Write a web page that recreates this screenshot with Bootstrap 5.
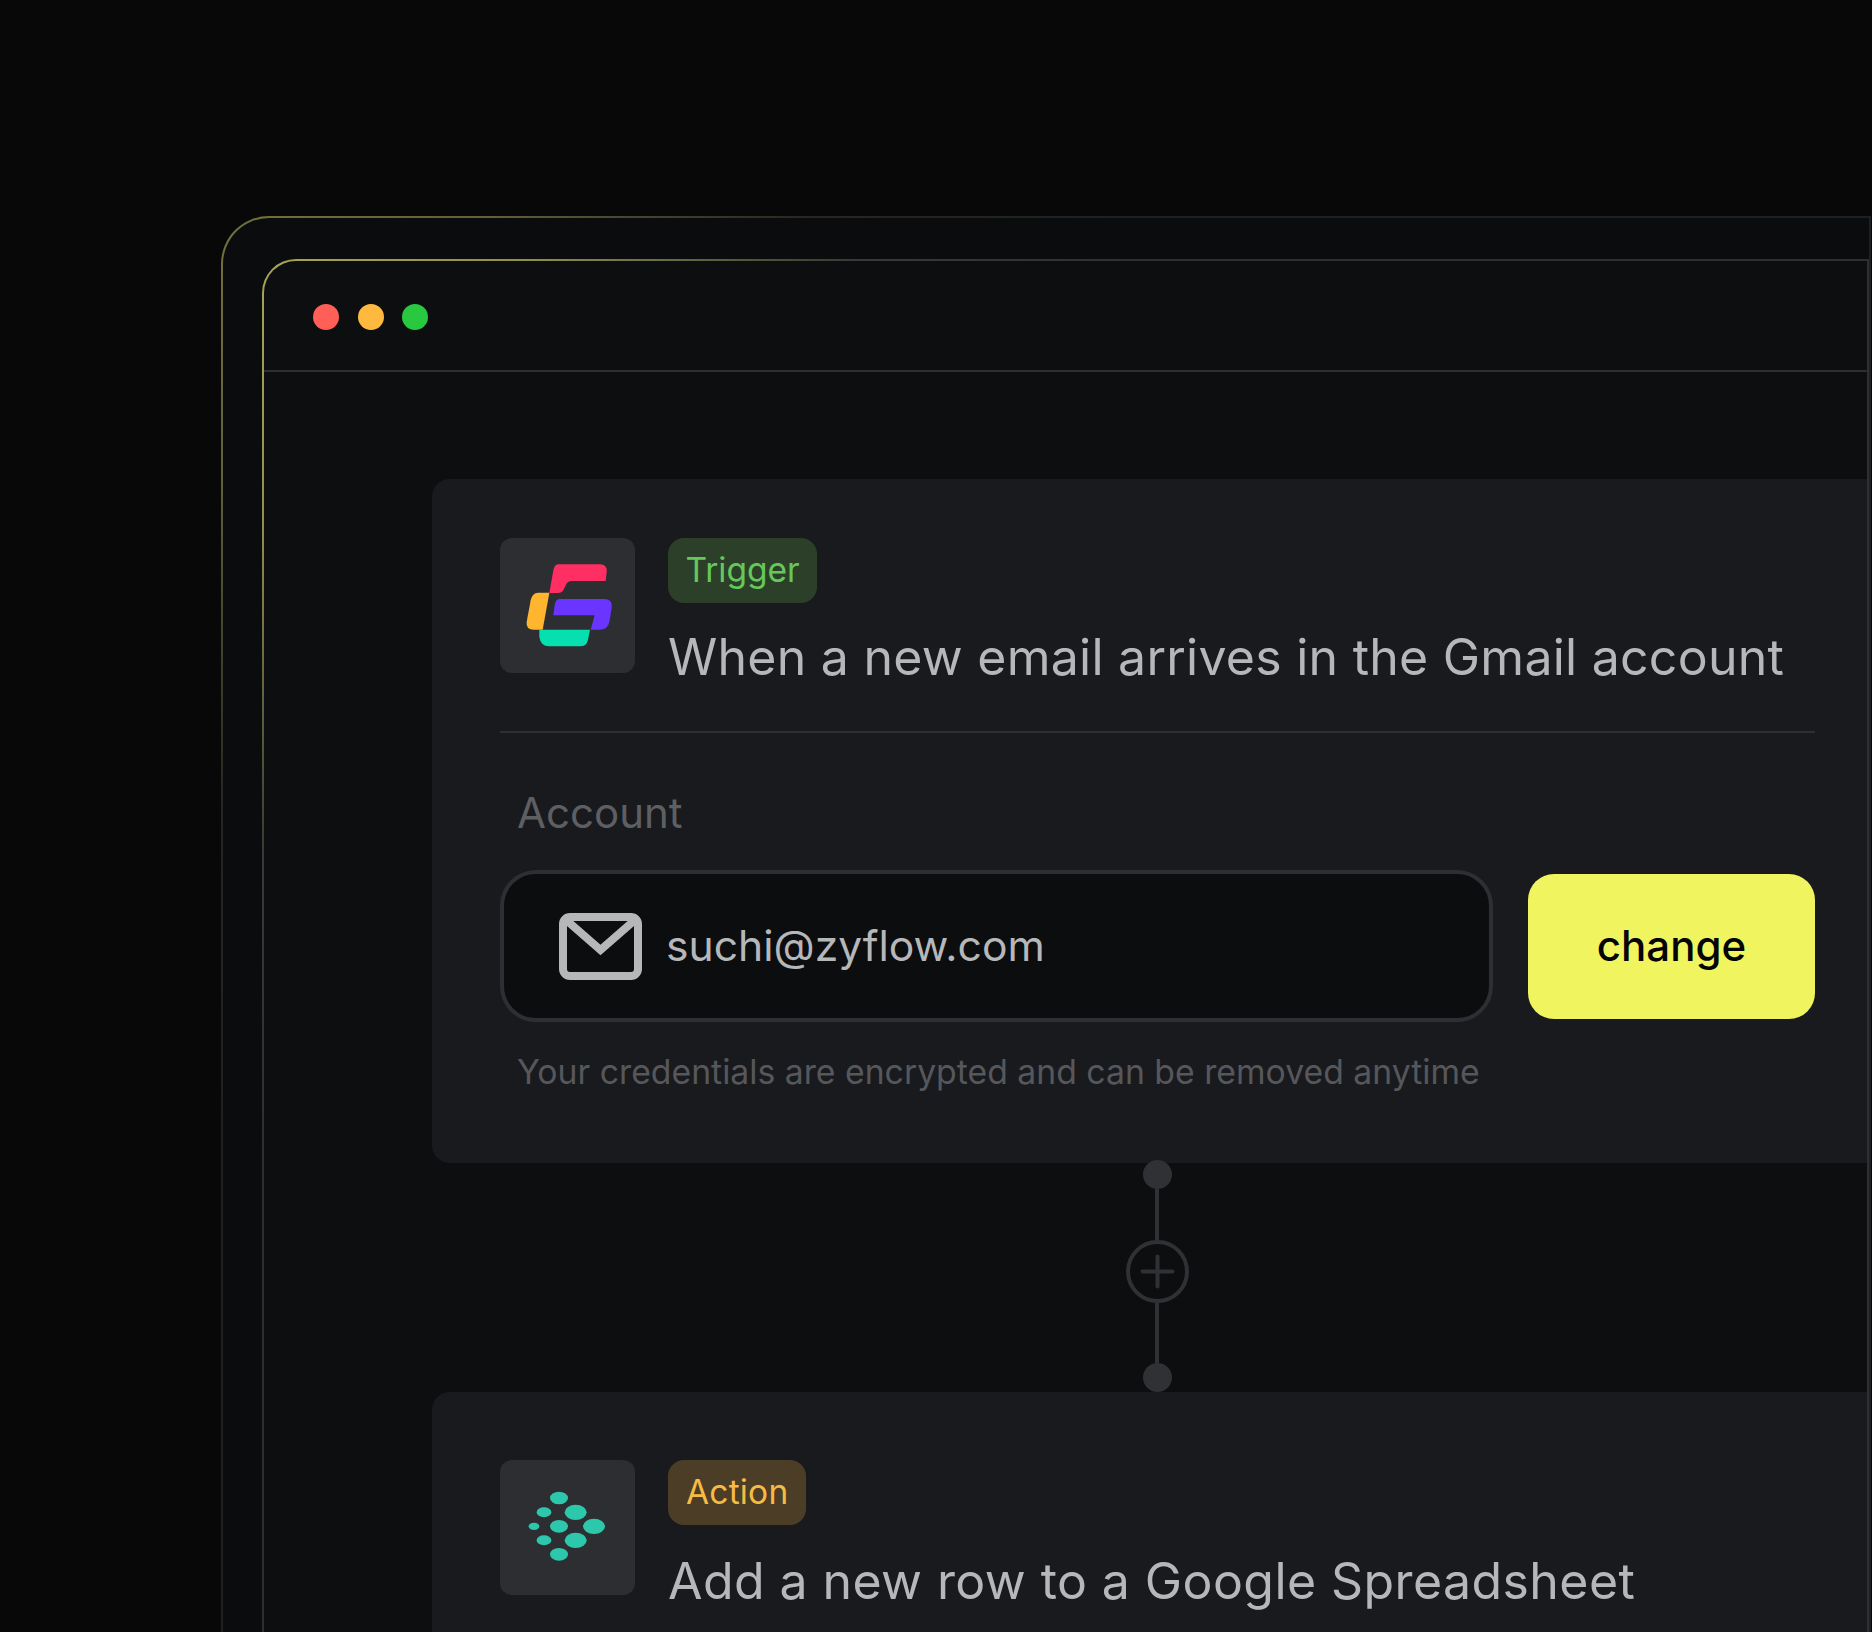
<!DOCTYPE html>
<html lang="en">
  <head>
    <meta charset="UTF-8" />
    <title>Zyflow workflow</title>
    <link href="https://cdn.jsdelivr.net/npm/bootstrap@5.3.3/dist/css/bootstrap.min.css" rel="stylesheet" />
    <style>
      body {
        height: 1632px;
        overflow: hidden;
        background: #080809;
        font-family: Inter, "Liberation Sans", sans-serif;
      }
      .frame-outer {
        height: 1416px;
        margin: 0 1px 0 221px;
        padding: 41px 0 0 39px;
        border: 2px solid transparent;
        border-bottom: 0;
        border-radius: 48px 0 0 0;
        background:
          linear-gradient(#0b0c0d, #0b0c0d) padding-box,
          radial-gradient(circle 900px at 0 0, #72723c 0, #60603a 30%, #262723 65%, #1f2022 100%) border-box;
      }
      .frame-top { padding-top: 216px; }
      .frame-inner {
        height: 1373px;
        border: 2px solid transparent;
        border-bottom: 0;
        border-radius: 34px 0 0 0;
        background:
          linear-gradient(#0d0e10, #0d0e10) padding-box,
          radial-gradient(circle 900px at 0 0, #a6a656 0, #8f8f4c 30%, #3a3b35 65%, #2e2f31 100%) border-box;
      }
      .window-bar {
        height: 111px;
        padding: 2px 0 0 49px;
        gap: 18.5px;
        border-bottom: 2px solid #2e2f32;
      }
      .window-dot { width: 26px; height: 26px; border-radius: 50%; }
      .dot-red { background: #ff5f57; }
      .dot-amber { background: #ffb93e; }
      .dot-green { background: #28c840; }
      .canvas { padding: 107px 0 0 168px; }
      .step-card {
        background: #191a1e;
        border-radius: 18px 0 0 18px;
        padding: 59px 52px 0 67.5px;
      }
      .step-first { height: 684px; }
      .step-second { height: 240px; padding-top: 68px; border-bottom-left-radius: 0; }
      .step-head { gap: 33.5px; }
      .app-icon {
        width: 135px;
        height: 135px;
        flex: none;
        background: #2d2e32;
        border-radius: 12px;
      }
      .step-tag {
        height: 65px;
        padding: 0 17.5px;
        border-radius: 16px;
        font-size: 33.5px;
        line-height: 64px;
      }
      .tag-trigger { background: #2c4029; color: #66c85a; }
      .tag-action { background: #4c3d26; color: #f6bb45; padding: 0 18px; letter-spacing: .2px; }
      .step-title {
        margin: 18px 0 0;
        font-size: 50px;
        font-weight: 400;
        line-height: 72px;
        color: #b6b7b9;
        letter-spacing: .25px;
        white-space: nowrap;
      }
      .step-second .step-title { margin-top: 20px; letter-spacing: .42px; }
      .step-rule { height: 2px; margin-top: 38px; background: #2e2f33; }
      .field-label {
        margin: 55px 0 0 17.5px;
        font-size: 42px;
        line-height: 50px;
        color: #5e5f63;
      }
      .field-row { margin-top: 32px; gap: 35px; }
      .mail-box {
        height: 152px;
        padding-left: 55px;
        gap: 24.5px;
        background: #0c0d0f;
        border: 4px solid #2e2f33;
        border-radius: 36px;
        color: #b6b7b9;
        font-size: 42.6px;
      }
      .btn-change {
        width: 287px;
        height: 145px;
        padding-bottom: 8px;
        flex: none;
        background: #eff45f;
        border: 0;
        border-radius: 26px;
        color: #050505;
        font-size: 42px;
        font-weight: 450;
      }
      .btn-change:hover { background: #eff45f; color: #050505; }
      .field-help {
        margin: 28px 0 0 17.5px;
        font-size: 33.75px;
        line-height: 44px;
        color: #56575b;
      }
      .connector { width: 62px; height: 232px; margin: -3px 0 0 694px; position: relative; z-index: 1; }
      .port { width: 29px; height: 29px; border-radius: 50%; background: #303135; flex: none; }
      .wire { width: 4px; background: #303135; flex: none; }
      .wire-top { height: 51px; }
      .wire-bottom { height: 60px; }
      .add-step { width: 63px; height: 63px; flex: none; }
    </style>
  </head>
  <body>
    <div class="frame-top">
      <div class="frame-outer">
        <div class="frame-inner">
          <div class="window-bar d-flex align-items-center">
            <span class="window-dot dot-red"></span>
            <span class="window-dot dot-amber"></span>
            <span class="window-dot dot-green"></span>
          </div>
          <main class="canvas">
            <section class="step-card step-first">
              <div class="d-flex step-head">
                <div class="app-icon">
                  <svg width="135" height="135" viewBox="58 53 405 405">
                    <path fill="#ff2e63" d="M232 132H358Q380 132 378 155L375 182H275Q258 182 254 198L250 205Q245 218 232 218H206L218 150Q222 132 232 132Z" />
                    <path fill="#ffb62e" d="M172 217H206L186 328H160Q135 328 138 305L150 240Q155 217 172 217Z" />
                    <path fill="#6a35ff" d="M236 236H372Q396 236 393 262L386 305Q382 328 355 328H330L342 285H218L222 255Q225 236 236 236Z" />
                    <path fill="#06e0b0" d="M176 328H328L322 358Q318 378 298 378H205Q180 378 176 350Z" />
                  </svg>
                </div>
                <div>
                  <span class="step-tag tag-trigger d-inline-block">Trigger</span>
                  <h2 class="step-title">When a new email arrives in the Gmail account</h2>
                </div>
              </div>
              <div class="step-rule"></div>
              <div class="field-label">Account</div>
              <div class="field-row d-flex align-items-center">
                <div class="mail-box flex-grow-1 d-flex align-items-center">
                  <svg width="83" height="67" viewBox="0 0 83 67" fill="none" stroke="#b6b7b9" stroke-width="8">
                    <rect x="4" y="4" width="75" height="59" rx="7" />
                    <path d="M6 6L41.5 37L77 6" />
                  </svg>
                  <span>suchi@zyflow.com</span>
                </div>
                <button type="button" class="btn btn-change">change</button>
              </div>
              <div class="field-help">Your credentials are encrypted and can be removed anytime</div>
            </section>

            <div class="connector d-flex flex-column align-items-center">
              <span class="port"></span>
              <span class="wire wire-top"></span>
              <svg class="add-step" viewBox="0 0 63 63" fill="none" stroke="#303135" stroke-width="4">
                <circle cx="31.5" cy="31.5" r="29.5" />
                <path stroke-linecap="round" d="M16.5 31.5H46.5M31.5 16.5V46.5" />
              </svg>
              <span class="wire wire-bottom"></span>
              <span class="port"></span>
            </div>

            <section class="step-card step-second">
              <div class="d-flex step-head">
                <div class="app-icon">
                  <svg width="135" height="135" viewBox="58 60 405 405" fill="#2dc8ab">
                    <ellipse cx="235" cy="174" rx="27" ry="19" />
                    <ellipse cx="285" cy="217" rx="33" ry="23" />
                    <ellipse cx="190" cy="217" rx="22" ry="15" />
                    <ellipse cx="340" cy="259" rx="33" ry="23" />
                    <ellipse cx="235" cy="259" rx="27" ry="19" />
                    <ellipse cx="160" cy="259" rx="16" ry="11" />
                    <ellipse cx="190" cy="301" rx="22" ry="15" />
                    <ellipse cx="285" cy="301" rx="33" ry="23" />
                    <ellipse cx="235" cy="343" rx="27" ry="19" />
                  </svg>
                </div>
                <div>
                  <span class="step-tag tag-action d-inline-block">Action</span>
                  <h2 class="step-title">Add a new row to a Google Spreadsheet</h2>
                </div>
              </div>
            </section>
          </main>
        </div>
      </div>
    </div>
  </body>
</html>
